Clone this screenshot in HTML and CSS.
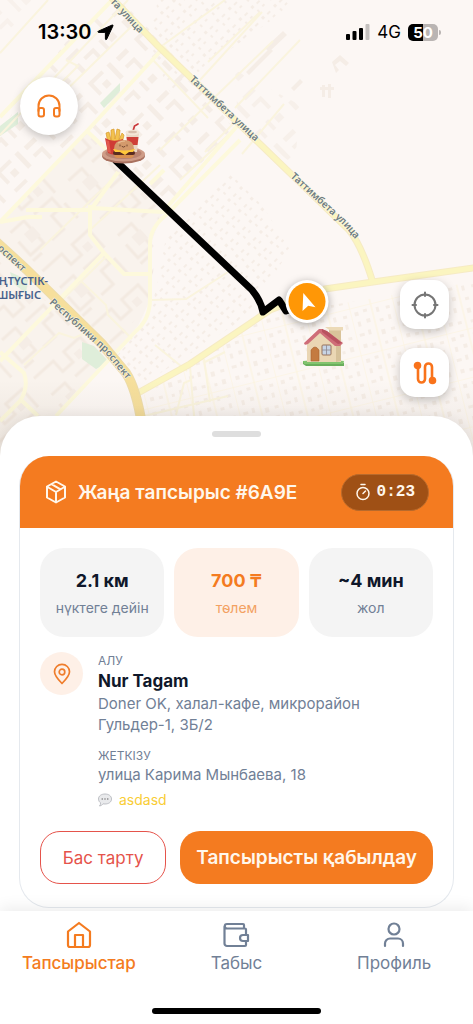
FILE: index.html
```html
<!DOCTYPE html>
<html lang="kk">
<head>
<meta charset="utf-8">
<meta name="viewport" content="width=device-width, initial-scale=1">
<title>Тапсырыстар</title>
<link rel="stylesheet" href="styles.css">
</head>
<body>
<div class="screen">
  <svg class="map" viewBox="0 0 473 460" preserveAspectRatio="xMidYMin slice" role="img" aria-label="Карта">
    <defs>
      <pattern id="blocks" width="64" height="58" patternUnits="userSpaceOnUse" patternTransform="rotate(-44)">
        <path class="building" d="M5 5h19v4H9v13H5zM31 5h5v20h-5zM43 6h14v5H43zM44 18h13v15h-4V22h-9zM6 30h16v4H6zM8 42h5v11H8zM20 41h14v11h-4v-7H20zM42 40h4v12h-4zM51 43h8v7h-8zM15 15h7v7h-7z"/>
      </pattern>
      <pattern id="courts" width="78" height="74" patternUnits="userSpaceOnUse" patternTransform="rotate(-42)">
        <path class="building-line" d="M6 8h26v14h14V8h22v24M8 32h18v30H8V44M38 34h24v13H50v18H34M68 46v20M6 68h12"/>
        <path class="building" d="M17 42h12v12H17zM52 16h8v8h-8z"/>
      </pattern>
      <pattern id="houses" width="17" height="15" patternUnits="userSpaceOnUse" patternTransform="rotate(-45)">
        <path class="building" d="M2 2h3v3H2zM9 3h4v2H9zM4 9h2v3H4zM11 9h3v2h-3z"/>
      </pattern>
      <pattern id="yards" width="44" height="48" patternUnits="userSpaceOnUse" patternTransform="rotate(-14)">
        <path class="lane" d="M0 0h44M0 0v48M22 0v48"/>
        <path class="building" d="M4 5h4v4H4zM13 4h4v3h-4zM5 15h3v5H5zM14 14h4v4h-4zM4 27h5v3H4zM13 25h3v5h-3zM5 38h4v4H5zM14 39h4v3h-4zM26 5h3v5h-3zM36 6h4v3h-4zM27 17h4v3h-4zM36 15h3v5h-3zM26 28h4v5h-4zM36 28h4v3h-4zM27 40h3v3h-3zM35 38h4v5h-4z"/>
      </pattern>
      <linearGradient id="map-fade" x1="0" y1="0" x2="0" y2="1">
        <stop offset="0" stop-color="#6b5a48" stop-opacity="0"/>
        <stop offset="1" stop-color="#6b5a48" stop-opacity=".12"/>
      </linearGradient>
      <path id="tattimbet-north" d="M110 2 150 45"/>
      <path id="tattimbet-mid" d="M189 80 262 148"/>
      <path id="tattimbet-south" d="M290 177 345 227 366 252"/>
      <path id="respublika-north" d="M-3 249 32 281"/>
      <path id="respublika-south" d="M49 303 104 352 132 386"/>
    </defs>

    <rect class="land" width="473" height="460"/>
    <path class="district" d="M0 222 88 132 110 152 163 212 152 240 150 300 138 326 56 416 0 460z"/>
    <path fill="url(#courts)" d="M0 222 88 132 160 210 150 300 110 352 30 270 0 244z"/>
    <path fill="url(#courts)" d="M0 262 45 300 108 352 56 416 0 460z"/>
    <path fill="url(#blocks)" d="M66 42 120 0 165 45 235 130 165 212 88 128 0 215V130z"/>
    <path fill="url(#blocks)" opacity=".6" d="M0 0h40L0 38z"/>
    <path fill="url(#houses)" d="M158 0h142L170 92 148 42z"/>
    <path fill="url(#blocks)" opacity=".7" d="M235 70 300 105 295 165 238 125z"/>
    <path fill="url(#houses)" d="M166 238 230 172 262 205 290 250 245 318 142 385 108 366 150 318z"/>
    <path fill="url(#yards)" d="M136 400 270 315 473 282V460H143z"/>
    <path class="building" d="m265 48 18-17 4 4-18 17zM246 72l24-24 3 3-24 24zM332 62l8-7 9 8-3 3-6-5-5 4 4 5-3 3zM320 87h14v3h-14zM322 85h3v12h-3zM328 84h3v14h-3zM291 88l9-9 3 3-9 9z"/>
    <path class="park" d="m0 126 18-14v12L0 136zM100 103l20-20v8l-16 17zM82 342l12 4 15 16-13 7-14-10zM10 272l18 8-2 13-12-9z"/>

    <g class="lanes">
      <path d="M0 53 48 0M66 60l12 6-18 18M128 0 0 135M138 20 48 108M153 60 208 118M165 48l70 74-30 30M225 0l-66 48M273 41 160 150M300 40 235 108M160 165l-70 65M200 80l62-68M24 365l35-32 15 5 14-6M80 280l26 25 2 10 24 24M152 300l34-1 42-27M205 362l20-10M120 172 40 250M284 104l-42 50M180 180l58-54M108 255 60 302M208 62l52-50M155 345l32 26M176 415l8-32 7-3M210 402l-6-43M190 366l4 50M228 396l-84 20"/>
    </g>
    <g class="minor">
      <path d="M165 46 88 130 0 222M88 132 110 153M112 0 0 117M238 125 163 212 92 208M164 170 150 184M26 210h64M90 205V235l14 18 20 21h26M104 253 0 361M240 140 166 215Q150 228 150 244v55q0 20-14 32L56 416M0 352l24 21q5 14-4 28L0 421M20 399l18 17M28 217 42 217M92 208 118 172M0 222 28 217"/>
    </g>
    <g class="major-edge">
      <path d="M106-8 158 46 260 144 349 230Q362 246 373 283M138 393 190 364 270 310 325 289 373 282 480 267"/>
    </g>
    <g class="major">
      <path d="M106-8 158 46 260 144 349 230Q362 246 373 283M138 393 190 364 270 310 325 289 373 282 480 267"/>
    </g>
    <path class="avenue-edge" d="M-10 236 26 269 102 344 126 373Q136 388 142 425"/>
    <path class="avenue" d="M-10 236 26 269 102 344 126 373Q136 388 142 425"/>
    <rect y="380" width="473" height="80" fill="url(#map-fade)"/>

    <g class="street">
      <text><textPath href="#tattimbet-north">та улица</textPath></text>
      <text><textPath href="#tattimbet-mid">Таттимбета улица</textPath></text>
      <text><textPath href="#tattimbet-south">Таттимбета улица</textPath></text>
      <text><textPath href="#respublika-north">оспект</textPath></text>
      <text><textPath href="#respublika-south">Республики проспект</textPath></text>
    </g>
    <g class="area-name">
      <text x="48" y="285" text-anchor="end">ОҢТҮСТІК-</text>
      <text x="41" y="299" text-anchor="end">ШЫҒЫС</text>
    </g>

    <path class="route" d="M115 160 252 290Q261 301 263 312L279 300 286 311 296 308"/>

    <g aria-label="Nur Tagam">
      <ellipse cx="123.500" cy="156" rx="21.500" ry="7.500" fill="#a9715f"/>
      <ellipse cx="123.500" cy="154" rx="21.500" ry="7.500" fill="#cf9c87"/>
      <ellipse cx="123.500" cy="153.500" rx="18" ry="5.500" fill="#b98270"/>
      <path d="m108 143-2-10 3-1 2 8 0-10 3-1 1 10 2-10 3 1-1 10 3-7 2 2-2 9z" fill="#f3c24f" stroke="#d99a2b" stroke-width=".7"/>
      <path d="M105 138q8 5 18 1l-3 15q-6 2-12-1z" fill="#cf3b35"/>
      <path d="M106 140q2 1 3 1l2 12-3-1z" fill="#e25a4d"/>
      <path d="m133 131 1.500-5 3.500-2" fill="none" stroke="#c9383a" stroke-width="1.700" stroke-linecap="round"/>
      <path d="M126 133h13l-2 19h-9z" fill="#ead7c5"/>
      <path d="m126.500 137 12 0-1 8-10 0z" fill="#cf3f38"/>
      <ellipse cx="132.500" cy="132.500" rx="7" ry="2.700" fill="#f4e6d7"/>
      <ellipse cx="132.500" cy="132" rx="4.500" ry="1.300" fill="#d9c0ae"/>
      <path d="M114 154h20q0 4-4 4h-12q-4 0-4-4z" fill="#d88f50"/>
      <rect x="113" y="151" width="22" height="4" rx="2" fill="#5a2c20"/>
      <path d="M113 149h22l-2 3-4 0-4 3-5-3-5 0z" fill="#ffc83b"/>
      <path d="M114 149q0-9 10-9t10 9q-10 3-20 0z" fill="#d39a6c"/>
      <path d="M118 143q3-2 7-2" stroke="#e8bd94" stroke-width="1.200" fill="none"/>
      <path d="M120 145v1M127 145v1M122 146.500q1.500 1.500 3 0" fill="none" stroke="#5d3322" stroke-width=".8" stroke-linecap="round"/>
    </g>

    <g aria-label="улица Карима Мынбаева, 18">
      <path d="M303 361h38l3 2v3l-38 0-3-2z" fill="#69ae5c"/>
      <path d="M303 361q20-2 41 0l-1 3h-39z" fill="#82c46f"/>
      <path d="M329 329h12v12h-12z" fill="#d9c39a"/>
      <path d="M325 327h18v3.500h-13z" fill="#ecdab7"/>
      <path d="M307 341 320 329l17 13 4 2v18h-34z" fill="#ead6b4"/>
      <path d="m336 343 5 2v16l-5 1z" fill="#d6c19a"/>
      <path d="M304 343 319 329l3 0 6 3 15 11-3 3-5 0-15-13-12 11q-4 2-4-1z" fill="#cf6d78"/>
      <path d="m322 329 5 2 15 12-4 1-16-12z" fill="#b95260"/>
      <path d="M311 361v-11q4-6 8 0v11z" fill="#c47a40" stroke="#a7622f" stroke-width=".6"/>
      <rect x="322" y="345" width="9" height="10" rx="1" fill="#c7d4e5" stroke="#99735a"/>
      <path d="M326.500 345v10M322 350h9" stroke="#8d8891" stroke-width=".8"/>
    </g>

    <g>
      <circle class="courier-halo" cx="307" cy="301.500" r="21.500"/>
      <circle class="courier" cx="307" cy="301.500" r="18.500"/>
      <path fill="#fff" d="M303.300 293 315.500 307.200 308.200 305.800 302.500 311z"/>
    </g>
  </svg>

  <header class="status-bar">
    <div class="status-left">
      <span class="clock">13:30</span>
      <svg width="17" height="17" viewBox="0 0 17 17" aria-hidden="true"><path d="M15.200 1 1.300 7.200q-1.100.7.200 1.200h6.300q.6 0 .6.600v6q.4 1.500 1.300.2L16 1.800q.2-1-.8-.8z" stroke="#000" stroke-linejoin="round"/></svg>
    </div>
    <div class="status-right">
      <svg width="24" height="16" viewBox="0 0 24 16" aria-hidden="true"><rect y="10" width="4" height="6" rx="1"/><rect x="6.500" y="7" width="4" height="9" rx="1"/><rect x="13" y="4" width="4" height="12" rx="1"/><rect x="19.500" width="4" height="16" rx="1" fill="#c4c0be"/></svg>
      <span class="network">4G</span>
      <span class="battery"><span class="battery-level">50</span></span>
    </div>
  </header>

  <main class="content">
    <div class="map-controls">
      <button class="support" type="button" aria-label="Қолдау">
        <svg width="26" height="26" viewBox="0 0 26 26" class="line-icon"><path d="M2.500 18v-5a10.500 10.500 0 0 1 21 0v5"/><rect x="2.500" y="15" width="5.500" height="8.500" rx="2"/><rect x="18" y="15" width="5.500" height="8.500" rx="2"/></svg>
      </button>
      <div class="map-tools">
        <button class="tool tool-locate" type="button" aria-label="Менің орным">
          <svg width="28" height="28" viewBox="0 0 28 28" class="line-icon"><circle cx="14" cy="14" r="10.500"/><path d="M14 1.500V5M14 23v3.500M1.500 14H5M23 14h3.500"/></svg>
        </button>
        <button class="tool tool-route" type="button" aria-label="Маршрут">
          <svg width="24" height="24" viewBox="0 0 24 24" class="route-icon"><path d="M5 5v13a3.500 3.500 0 0 0 7 0V6a3.500 3.500 0 0 1 7 0v13"/><circle cx="4.500" cy="4.500" r="2.500"/><circle cx="19.500" cy="19.500" r="2.500"/></svg>
        </button>
      </div>
    </div>

    <section class="sheet">
      <div class="handle"></div>
      <article class="order">
        <header class="order-head">
          <svg width="24" height="24" viewBox="0 0 24 24" class="line-icon" aria-hidden="true"><path d="M12 1.500 21 6.500v11L12 22.500 3 17.500v-11zM3.500 7 12 12l8.500-5M12 12v10M7.500 4.200 16.500 9.300"/></svg>
          <h1 class="order-title">Жаңа тапсырыс #6A9E</h1>
          <div class="timer">
            <svg width="16" height="18" viewBox="0 0 16 18" class="line-icon timer-icon" aria-hidden="true"><circle cx="8" cy="10.500" r="6"/><path d="M8 10.500 10.500 8M6 1.500h4"/></svg>
            <span>0:23</span>
          </div>
        </header>
        <div class="order-body">
          <div class="stats">
            <div class="stat"><strong class="stat-value">2.1 км</strong><span class="stat-label">нүктеге дейін</span></div>
            <div class="stat stat-pay"><strong class="stat-value">700 ₸</strong><span class="stat-label">төлем</span></div>
            <div class="stat"><strong class="stat-value">~4 мин</strong><span class="stat-label">жол</span></div>
          </div>
          <div class="stops">
            <div class="pin">
              <svg width="22" height="22" viewBox="0 0 22 22" class="line-icon pin-icon" aria-hidden="true"><path d="M11 20.500C7 16.500 3.500 13 3.500 8.800a7.500 7.500 0 0 1 15 0C18.500 13 15 16.500 11 20.500z"/><circle cx="11" cy="9" r="2.800"/></svg>
            </div>
            <div class="stop-list">
              <section class="stop">
                <span class="stop-kind">АЛУ</span>
                <h2 class="stop-name">Nur Tagam</h2>
                <p class="address">Doner OK, халал-кафе, микрорайон Гульдер-1, 3Б/2</p>
              </section>
              <section class="stop">
                <span class="stop-kind">ЖЕТКІЗУ</span>
                <p class="address">улица Карима Мынбаева, 18</p>
                <p class="comment"><svg width="14" height="14" viewBox="0 0 14 14" aria-hidden="true"><path d="M7 1C10.800 1 13.500 3 13.500 6S10.800 11 7 11q-1 0-2-.2Q3.500 13 1.500 13 2.800 11.500 2.500 9.800.5 8.500.5 6C.5 3 3.200 1 7 1z" fill="#e9eaec" stroke="#b8babf" stroke-width=".9"/><circle cx="4.200" cy="6" r=".7" fill="#666"/><circle cx="7" cy="6" r=".7" fill="#666"/><circle cx="9.800" cy="6" r=".7" fill="#666"/></svg>asdasd</p>
              </section>
            </div>
          </div>
          <div class="actions">
            <button class="btn btn-decline" type="button">Бас тарту</button>
            <button class="btn btn-accept" type="button">Тапсырысты қабылдау</button>
          </div>
        </div>
      </article>
    </section>
  </main>

  <nav class="tabs">
    <div class="tab-row">
      <a class="tab tab-active" href="#orders">
        <svg width="28" height="28" viewBox="0 0 28 28" class="line-icon tab-icon" aria-hidden="true"><path d="M3 10.500 14 2l11 8.500V24a2 2 0 0 1-2 2H5a2 2 0 0 1-2-2zM10 26V14h8v12"/></svg>
        <span>Тапсырыстар</span>
      </a>
      <a class="tab" href="#income">
        <svg width="28" height="28" viewBox="0 0 28 28" class="line-icon tab-icon" aria-hidden="true"><path d="M22 7.500V4a1 1 0 0 0-1-1H5a2.250 2.250 0 0 0 0 4.500h18a1 1 0 0 1 1 1V14M24 20v4a1 1 0 0 1-1 1H5a2.500 2.500 0 0 1-2.500-2.500V5.500M26 14h-5a3 3 0 0 0 0 6h5z"/></svg>
        <span>Табыс</span>
      </a>
      <a class="tab" href="#profile">
        <svg width="28" height="28" viewBox="0 0 28 28" class="line-icon tab-icon" aria-hidden="true"><circle cx="14" cy="8" r="5.500"/><path d="M5 25v-2.500a5 5 0 0 1 5-5h8a5 5 0 0 1 5 5V25"/></svg>
        <span>Профиль</span>
      </a>
    </div>
    <div class="home-indicator"></div>
  </nav>
</div>
</body>
</html>
```
FILE: styles.css
```css
* {
  box-sizing: border-box;
}

body {
  margin: 0;
  background: #fff;
  color: #0f172a;
  font-family: Inter, "Noto Sans", sans-serif;
}

h1, h2, p {
  margin: 0;
}

button {
  font: inherit;
  cursor: pointer;
}

svg {
  display: block;
  flex: none;
}

.screen {
  position: relative;
  display: flex;
  flex-direction: column;
  min-height: 100vh;
  overflow: hidden;
}

/* Map */
.map {
  position: absolute;
  top: 0;
  left: 0;
  width: 100%;
}

.land { fill: #fcf7f4; }
.district { fill: #f9f3ed; }
.building { fill: #f5ede6; }
.building-line { fill: none; stroke: #f3eae1; stroke-width: 3; }
.park { fill: #dfeeda; }
.lane { fill: none; stroke: #fbf3dc; stroke-width: 1; }
.lanes { fill: none; stroke: #faf4de; stroke-width: 2; }
.minor { fill: none; stroke: #fdf9dc; stroke-width: 4; stroke-linejoin: round; }
.major-edge { fill: none; stroke: #f6ebc4; stroke-width: 7; }
.major { fill: none; stroke: #fbf5c0; stroke-width: 5; }
.avenue-edge { fill: none; stroke: #eddcaa; stroke-width: 10; }
.avenue { fill: none; stroke: #f6df9c; stroke-width: 8; }

.street {
  font: 600 10px "Noto Sans", sans-serif;
  fill: #6f7d80;
  stroke: #fdf9ec;
  stroke-width: 1px;
  paint-order: stroke;
}

.area-name {
  font: 600 11px "Noto Sans", sans-serif;
  fill: #47618c;
}

.route {
  fill: none;
  stroke: #000;
  stroke-width: 7;
  stroke-linejoin: round;
}

.courier-halo {
  fill: #fff;
  filter: drop-shadow(0 2px 4px rgb(0 0 0 / .35));
}

.courier { fill: #ff9706; }

/* Status bar */
.status-bar {
  position: relative;
  display: flex;
  align-items: center;
  justify-content: space-between;
  height: 64px;
  padding: 0 29px 0 38px;
  color: #000;
}

.status-left,
.status-right {
  display: flex;
  align-items: center;
}

.status-left { gap: 6px; }
.status-right { gap: 7px; }

.clock {
  font-size: 20px;
  font-weight: 600;
}

.network {
  font-size: 17px;
}

.battery {
  display: flex;
  align-items: center;
  padding-right: 3px;
}

.battery::after {
  content: "";
  width: 2px;
  height: 5px;
  margin-left: 1px;
  border-radius: 0 2px 2px 0;
  background: #bab5b3;
}

.battery-level {
  width: 30px;
  border-radius: 5px;
  background: linear-gradient(90deg, #000 50%, #bab5b3 50%);
  color: #fff;
  font-size: 15px;
  font-weight: 700;
  line-height: 17px;
  text-align: center;
}

.line-icon {
  fill: none;
  stroke: currentColor;
  stroke-width: 2;
  stroke-linecap: round;
  stroke-linejoin: round;
}

/* Map controls */
.content {
  position: relative;
  display: flex;
  flex: 1;
  flex-direction: column;
}

.map-controls {
  display: flex;
  flex: 1;
  justify-content: space-between;
  padding: 13px 24px 19px 20px;
}

.support,
.tool {
  display: grid;
  place-items: center;
  padding: 0;
  border: 0;
  background: #fff;
  box-shadow: 0 3px 10px rgb(0 0 0 / .22);
}

.support {
  width: 58px;
  height: 58px;
  border-radius: 50%;
  color: #f47b20;
}

.map-tools {
  display: flex;
  flex-direction: column;
  justify-content: flex-end;
  gap: 19px;
}

.tool {
  width: 49px;
  height: 49px;
  border-radius: 15px;
}

.tool-locate { color: #757575; }
.tool-route { color: #f9731b; }

.route-icon {
  fill: currentColor;
  stroke: currentColor;
  stroke-width: 2.6;
}

.route-icon path { fill: none; }

/* Bottom sheet */
.sheet {
  padding: 15px 19px 3px;
  border-radius: 40px 40px 0 0;
  background: #fff;
  box-shadow: 0 -2px 12px rgb(0 0 0 / .06);
}

.handle {
  width: 49px;
  height: 6px;
  margin: 0 auto 19px;
  border-radius: 3px;
  background: #dedede;
}

.order {
  overflow: hidden;
  border: 1px solid #e5e9ee;
  border-top: 0;
  border-radius: 30px;
}

.order-head {
  display: flex;
  align-items: center;
  gap: 10px;
  height: 72px;
  margin: 0 -1px;
  padding: 0 25px;
  background: #f47b20;
  color: #fff7ec;
}

.order-title {
  flex: 1;
  font-size: 19px;
  font-weight: 600;
  white-space: nowrap;
}

.timer {
  display: flex;
  align-items: center;
  gap: 6px;
  height: 37px;
  padding: 0 13px;
  border: 1px solid #b86a2c;
  border-radius: 19px;
  background: #9f5015;
  font-family: "Liberation Mono", monospace;
  font-size: 16px;
  font-weight: 700;
}

.timer-icon { stroke-width: 1.5; }

.order-body {
  padding: 20px 20px 23px;
}

.stats {
  display: grid;
  grid-template-columns: repeat(3, 1fr);
  gap: 10px;
}

.stat {
  display: flex;
  flex-direction: column;
  align-items: center;
  gap: 5px;
  padding: 20px 4px;
  border-radius: 24px;
  background: #f4f4f4;
}

.stat-value {
  font-size: 18px;
  font-weight: 700;
  line-height: 26px;
}

.stat-label {
  color: #718096;
  font-size: 14px;
  line-height: 18px;
  white-space: nowrap;
}

.stat-pay {
  background: #fef0e7;
  color: #f47b20;
}

.stat-pay .stat-label { color: #f3a162; }

.stops {
  display: flex;
  gap: 15px;
  padding: 15px 0 21px;
}

.pin {
  display: grid;
  flex: none;
  place-items: center;
  width: 43px;
  height: 43px;
  border-radius: 50%;
  background: #fef0e7;
  color: #ef7d2c;
}

.pin-icon { stroke-width: 1.7; }

.stop-list {
  display: grid;
  gap: 12px;
}

.stop-kind {
  display: block;
  color: #718096;
  font-size: 12px;
  line-height: 17px;
}

.stop-name {
  font-size: 17px;
  font-weight: 700;
  line-height: 24px;
}

.address {
  color: #718096;
  font-size: 15px;
  line-height: 21px;
}

.comment {
  display: flex;
  align-items: center;
  gap: 7px;
  margin-top: 5px;
  color: #f9cd35;
  font-size: 14px;
  line-height: 20px;
}

.actions {
  display: grid;
  grid-template-columns: 1fr 2fr;
  gap: 14px;
}

.btn {
  height: 53px;
  padding: 0;
  border: 0;
  border-radius: 20px;
  white-space: nowrap;
}

.btn-decline {
  border: 1px solid #e5534b;
  background: #fff;
  color: #e5534b;
  font-size: 17px;
}

.btn-accept {
  background: #f47b20;
  color: #fff7ec;
  font-size: 19px;
  font-weight: 600;
}

/* Tab bar */
.tabs {
  position: relative;
  padding: 10px 0 10px;
  background: #fff;
  box-shadow: 0 -4px 14px rgb(0 0 0 / .07);
}

.tab-row {
  display: grid;
  grid-template-columns: repeat(3, 1fr);
}

.tab {
  display: flex;
  flex-direction: column;
  align-items: center;
  gap: 2px;
  color: #718096;
  font-size: 17px;
  line-height: 24px;
  text-decoration: none;
}

.tab-icon { stroke-width: 2.2; }

.tab-active {
  color: #f47b20;
  font-weight: 500;
}

.home-indicator {
  width: 169px;
  height: 6px;
  margin: 33px auto 0;
  border-radius: 3px;
  background: #000;
}
```
